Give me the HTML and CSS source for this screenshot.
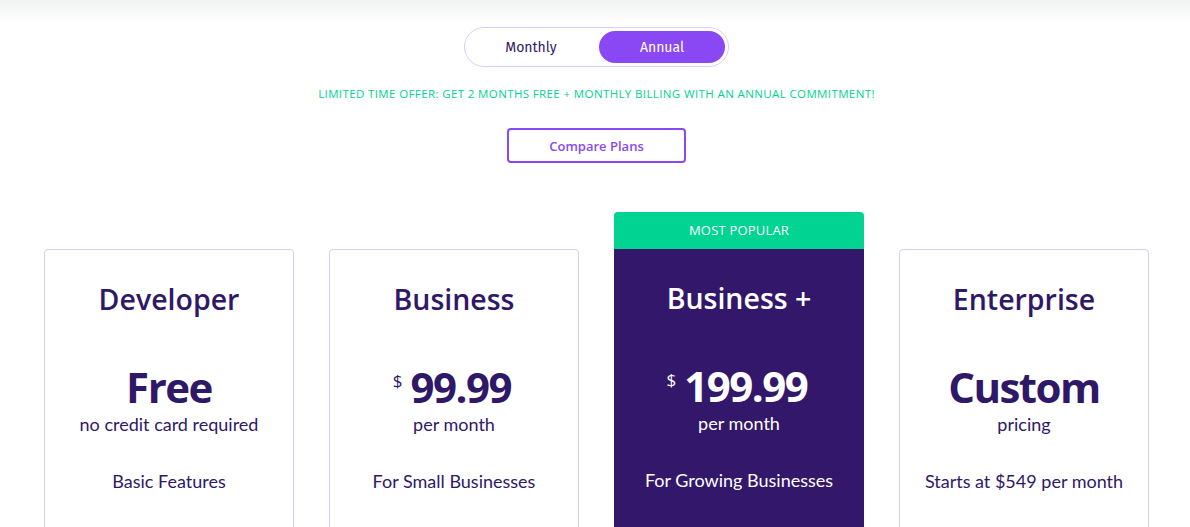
FILE: index.html
```html
<!DOCTYPE html>
<html lang="en">
<head>
<meta charset="utf-8">
<title>Pricing</title>
<link rel="stylesheet" href="styles.css">
</head>
<body>
<div class="topshade"></div>
<main class="pricing">
  <div class="toggle">
    <button class="toggle-btn">Monthly</button>
    <button class="toggle-btn active">Annual</button>
  </div>
  <p class="offer">Limited time offer: Get 2 months free + monthly billing with an annual commitment!</p>
  <button class="compare">Compare Plans</button>

  <div class="cards">
    <div class="plan">
      <div class="card">
        <h2 class="title">Developer</h2>
        <div class="price">Free</div>
        <div class="per">no credit card required</div>
        <div class="feature">Basic Features</div>
      </div>
    </div>
    <div class="plan">
      <div class="card">
        <h2 class="title">Business</h2>
        <div class="price"><span class="cur">$</span>99.99</div>
        <div class="per">per month</div>
        <div class="feature">For Small Businesses</div>
      </div>
    </div>
    <div class="plan popular">
      <div class="badge">MOST POPULAR</div>
      <div class="card">
        <h2 class="title">Business +</h2>
        <div class="price"><span class="cur">$</span>199.99</div>
        <div class="per">per month</div>
        <div class="feature">For Growing Businesses</div>
      </div>
    </div>
    <div class="plan">
      <div class="card">
        <h2 class="title">Enterprise</h2>
        <div class="price">Custom</div>
        <div class="per">pricing</div>
        <div class="feature">Starts at $549 per month</div>
      </div>
    </div>
  </div>
</main>
</body>
</html>
```

FILE: styles.css
```css
* { box-sizing: border-box; }
html, body {
  margin: 0;
  padding: 0;
  background: #fff;
  overflow: hidden;
}
body {
  font-family: Lato, "Open Sans", sans-serif;
  color: #2f1868;
  height: 527px;
  position: relative;
}
.topshade {
  position: absolute;
  left: 0; right: 0; top: 0;
  height: 24px;
  background: linear-gradient(#f1f2f2, #ffffff);
}
.pricing {
  position: relative;
  display: flex;
  flex-direction: column;
  align-items: center;
  padding-top: 27px;
}
.toggle {
  display: flex;
  width: 265px;
  height: 40px;
  border: 1px solid #d8cff7;
  border-radius: 20px;
  padding: 3px;
  justify-content: space-between;
  background: #fff;
  margin-left: 3px;
}
.toggle-btn {
  width: 126px;
  height: 32px;
  border: none;
  border-radius: 16px;
  background: transparent;
  font-family: "Fira Sans", "Open Sans", sans-serif;
  font-size: 14px;
  color: #2f1868;
  padding: 0;
  cursor: pointer;
}
.toggle-btn.active {
  background: #8a48f5;
  color: #fff;
}
.offer {
  margin: 19px 0 0;
  margin-left: 3px;
  font-family: "Open Sans", sans-serif;
  font-size: 11.5px;
  line-height: 16px;
  letter-spacing: 0.38px;
  text-transform: uppercase;
  color: #00d392;
}
.compare {
  margin-top: 26px;
  margin-left: 3px;
  width: 179px;
  height: 35px;
  border: 2px solid #8a48f5;
  border-radius: 4px;
  background: #fff;
  color: #8a48f5;
  font-family: "Open Sans", sans-serif;
  font-weight: 600;
  font-size: 13px;
  padding: 0;
}
.cards {
  display: flex;
  gap: 35px;
  margin-top: 49px;
  margin-left: 3px;
  align-items: flex-end;
}
.plan {
  width: 250px;
  display: flex;
  flex-direction: column;
}
.card {
  border: 1px solid #d5cff8;
  border-radius: 4px;
  height: 330px;
  text-align: center;
  padding-top: 31px;
  color: #2f1868;
}
.popular .card {
  background: #32176a;
  border-color: #32176a;
  border-radius: 0;
  color: #fff;
}
.badge {
  height: 37px;
  background: #00d392;
  color: #fff;
  border-radius: 4px 4px 0 0;
  font-family: "Open Sans", sans-serif;
  font-size: 13px;
  line-height: 37px;
  text-align: center;
  letter-spacing: 0.2px;
}
.title {
  margin: 0;
  font-family: "Open Sans", sans-serif;
  font-weight: 600;
  font-size: 28.5px;
  line-height: 36px;
  letter-spacing: 0;
}
.popular .title { margin-top: -1px; margin-bottom: 1px; }
.price {
  margin-top: 48px;
  font-family: "Open Sans", sans-serif;
  font-weight: 700;
  font-size: 42px;
  line-height: 44px;
  letter-spacing: -1.5px;
}
.cur {
  font-size: 17px;
  font-weight: 400;
  vertical-align: top;
  position: relative;
  top: -6px;
  margin-left: -4px;
  margin-right: 8px;
  letter-spacing: 0;
}
.per {
  font-family: Lato, sans-serif;
  font-size: 18px;
  line-height: 24px;
  margin-top: 3px;
}
.feature {
  font-family: Lato, sans-serif;
  font-size: 18px;
  line-height: 24px;
  margin-top: 33px;
}
```
